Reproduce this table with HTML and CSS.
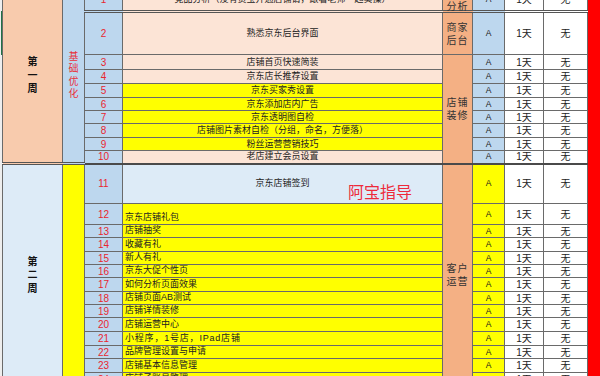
FILE: index.html
```html
<!DOCTYPE html>
<html lang="zh">
<head>
<meta charset="utf-8">
<title>课程表</title>
<link rel="stylesheet" href="styles.css">
</head>
<body>
<div class="page">
  <div class="strip"><div class="sel"></div></div>
  <table class="sheet">
    <colgroup>
      <col class="c-week"><col class="c-mod"><col class="c-num"><col class="c-txt"><col class="c-cat"><col class="c-lv"><col class="c-day"><col class="c-no"><col class="c-red">
    </colgroup>
    <tbody>
      <tr class="h23 r1">
        <td rowspan="10" class="pe week"><div class="vt">第一周</div></td>
        <td rowspan="10" class="lb mod"><div class="vt">基础优化</div></td>
        <td class="lb num">1</td>
        <td class="pk mid">竞品分析（没有货宝开通店铺请，跟着老师一起实操）</td>
        <td class="cat cat-top"><div class="stack">竞品<br>分析</div></td>
        <td class="lb lv">A</td><td class="w day">1天</td><td class="w no">无</td><td class="red"></td>
      </tr>
      <tr class="h43">
        <td class="lb num">2</td><td class="pk mid">熟悉京东后台界面</td>
        <td class="cat">商家<br>后台</td>
        <td class="lb lv">A</td><td class="w day">1天</td><td class="w no">无</td><td class="red"></td>
      </tr>
      <tr class="h15">
        <td class="lb num">3</td><td class="pk mid">店铺首页快速简装</td>
        <td rowspan="8" class="cat">店铺<br>装修</td>
        <td class="lb lv">A</td><td class="w day">1天</td><td class="w no">无</td><td class="red"></td>
      </tr>
      <tr class="h14">
        <td class="lb num">4</td><td class="pk mid">京东店长推荐设置</td>
        <td class="lb lv">A</td><td class="w day">1天</td><td class="w no">无</td><td class="red"></td>
      </tr>
      <tr class="h14">
        <td class="lb num">5</td><td class="y mid">京东买家秀设置</td>
        <td class="lb lv">A</td><td class="w day">1天</td><td class="w no">无</td><td class="red"></td>
      </tr>
      <tr class="h13">
        <td class="lb num">6</td><td class="y mid">京东添加店内广告</td>
        <td class="lb lv">A</td><td class="w day">1天</td><td class="w no">无</td><td class="red"></td>
      </tr>
      <tr class="h13">
        <td class="lb num">7</td><td class="y mid">京东透明图自检</td>
        <td class="lb lv">A</td><td class="w day">1天</td><td class="w no">无</td><td class="red"></td>
      </tr>
      <tr class="h14">
        <td class="lb num">8</td><td class="y mid">店铺图片素材自检（分组，命名，方便落）</td>
        <td class="lb lv">A</td><td class="w day">1天</td><td class="w no">无</td><td class="red"></td>
      </tr>
      <tr class="h13">
        <td class="lb num">9</td><td class="y mid">粉丝运营营销技巧</td>
        <td class="lb lv">A</td><td class="w day">1天</td><td class="w no">无</td><td class="red"></td>
      </tr>
      <tr class="h13">
        <td class="lb num">10</td><td class="pk mid">老店建立会员设置</td>
        <td class="lb lv">A</td><td class="w day">1天</td><td class="w no">无</td><td class="red"></td>
      </tr>
      <tr class="h40 wk2">
        <td rowspan="14" class="xb week"><div class="vt">第二周</div></td>
        <td rowspan="14" class="y mod"></td>
        <td class="lb num">11</td><td class="xb mid">京东店铺签到</td>
        <td rowspan="14" class="cat">客户<br>运营</td>
        <td class="y lv">A</td><td class="w day">1天</td><td class="w no">无</td><td class="red"></td>
      </tr>
      <tr class="h21">
        <td class="lb num">12</td><td class="y low">京东店铺礼包</td>
        <td class="y lv">A</td><td class="w day">1天</td><td class="w no">无</td><td class="red"></td>
      </tr>
      <tr class="h13">
        <td class="lb num">13</td><td class="y low">店铺抽奖</td>
        <td class="y lv">A</td><td class="w day">1天</td><td class="w no">无</td><td class="red"></td>
      </tr>
      <tr class="h14">
        <td class="lb num">14</td><td class="y low">收藏有礼</td>
        <td class="y lv">A</td><td class="w day">1天</td><td class="w no">无</td><td class="red"></td>
      </tr>
      <tr class="h13">
        <td class="lb num">15</td><td class="y low">新人有礼</td>
        <td class="y lv">A</td><td class="w day">1天</td><td class="w no">无</td><td class="red"></td>
      </tr>
      <tr class="h13">
        <td class="lb num">16</td><td class="y low">京东大促个性页</td>
        <td class="y lv">A</td><td class="w day">1天</td><td class="w no">无</td><td class="red"></td>
      </tr>
      <tr class="h14">
        <td class="lb num">17</td><td class="y low">如何分析页面效果</td>
        <td class="y lv">A</td><td class="w day">1天</td><td class="w no">无</td><td class="red"></td>
      </tr>
      <tr class="h13">
        <td class="lb num">18</td><td class="y low">店铺页面AB测试</td>
        <td class="y lv">A</td><td class="w day">1天</td><td class="w no">无</td><td class="red"></td>
      </tr>
      <tr class="h13">
        <td class="lb num">19</td><td class="y low">店铺详情装修</td>
        <td class="y lv">A</td><td class="w day">1天</td><td class="w no">无</td><td class="red"></td>
      </tr>
      <tr class="h14">
        <td class="lb num">20</td><td class="y low">店铺运营中心</td>
        <td class="y lv">A</td><td class="w day">1天</td><td class="w no">无</td><td class="red"></td>
      </tr>
      <tr class="h14">
        <td class="lb num">21</td><td class="y low wide">小程序，1号店，IPad店铺</td>
        <td class="y lv">A</td><td class="w day">1天</td><td class="w no">无</td><td class="red"></td>
      </tr>
      <tr class="h13">
        <td class="lb num">22</td><td class="y low">品牌管理设置与申请</td>
        <td class="y lv">A</td><td class="w day">1天</td><td class="w no">无</td><td class="red"></td>
      </tr>
      <tr class="h14">
        <td class="lb num">23</td><td class="y low">店铺基本信息管理</td>
        <td class="y lv">A</td><td class="w day">1天</td><td class="w no">无</td><td class="red"></td>
      </tr>
      <tr class="h13">
        <td class="lb num">24</td><td class="y low">店铺子账号管理</td>
        <td class="y lv">A</td><td class="w day">1天</td><td class="w no">无</td><td class="red"></td>
      </tr>
    </tbody>
  </table>
</div>
<div class="stamp">阿宝指导</div>
</body>
</html>
```
FILE: styles.css
```css
html, body {
  margin: 0;
  padding: 0;
  background: #ffffff;
}
body {
  position: relative;
  width: 600px;
  height: 376px;
  overflow: hidden;
  font-family: "Liberation Sans", "Noto Sans CJK SC", sans-serif;
  color: #222222;
}
.page {
  display: flex;
  margin-top: -12px;
  width: 620px;
}
.strip {
  width: 2px;
  flex: 0 0 2px;
  background: #eeeeee;
}
.sel {
  margin-top: 23px;
  margin-left: 1px;
  width: 1px;
  height: 44px;
  background: #217346;
}
.sheet {
  border-collapse: collapse;
  table-layout: fixed;
  width: 618px;
  font-size: 9px;
  line-height: 11px;
}
.c-week { width: 60px; }
.c-mod { width: 22px; }
.c-num { width: 38px; }
.c-txt { width: 320px; }
.c-cat { width: 30px; }
.c-lv { width: 32px; }
.c-day { width: 39px; }
.c-no { width: 44px; }
.c-red { width: 33px; }

.sheet td {
  border: 1px solid #6a6a6a;
  padding: 0;
  text-align: center;
  vertical-align: middle;
  white-space: nowrap;
  overflow: visible;
}
.h13 { height: 13px; }
.h14 { height: 14px; }
.h15 { height: 15px; }
.h21 { height: 21px; }
.h23 { height: 23px; }
.h40 { height: 40px; }
.h43 { height: 43px; }

.r1 td { border-bottom: 3px double #555555; }
.wk2 td { border-top: 2px solid #4a4a4a; }

.pe { background: #f8cbad; }
.pk { background: #fce4d6; }
.lb { background: #bdd7ee; }
.xb { background: #ddebf7; }
.y { background: #ffff00; }
.w { background: #ffffff; }
.cat {
  background: #f4b084;
  font-size: 10px;
  line-height: 13px;
  letter-spacing: 1px;
  color: #333333;
  white-space: normal;
}
.sheet td.cat-top {
  vertical-align: bottom;
}
.stack {
  height: 13px;
  margin-bottom: -3px;
  display: flex;
  flex-direction: column;
  justify-content: flex-end;
  align-items: center;
}
.sheet td.red {
  background: #ff0000;
  border-top: none;
  border-bottom: none;
  border-right: none;
}

.vt {
  width: 10px;
  margin: 0 auto;
  font-size: 10px;
  line-height: 13.5px;
  white-space: normal;
  word-break: break-all;
}
.week .vt {
  font-weight: bold;
  color: #111111;
}
.mod .vt {
  color: #e8303a;
  line-height: 12.5px;
}
.num {
  color: #e8262f;
  font-size: 10px;
}
.mid {
  text-align: center;
  color: #222222;
}
.sheet td.low {
  text-align: left;
  vertical-align: bottom;
  padding-left: 2px;
  padding-bottom: 1px;
  color: #222222;
}
.sheet td.wide {
  letter-spacing: 0.8px;
}
.lv {
  font-size: 8.5px;
  color: #1a1a1a;
}
.day, .no {
  font-size: 10px;
  color: #222222;
}

.stamp {
  position: absolute;
  left: 348px;
  top: 181px;
  font-family: "Noto Sans CJK SC", sans-serif;
  font-size: 16px;
  line-height: 20px;
  color: #ee2a3a;
  letter-spacing: 0;
}
```
